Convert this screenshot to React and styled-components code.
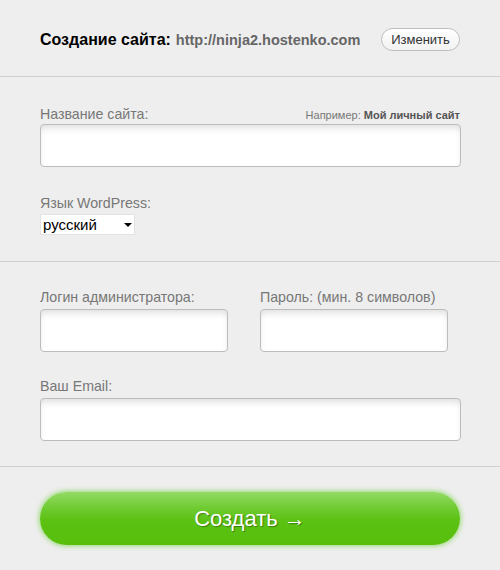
import React from 'react'
import styled, { createGlobalStyle } from 'styled-components'

const GlobalStyle = createGlobalStyle`
  html, body {
    margin: 0;
    padding: 0;
    background: #eeeeee;
  }
  body {
    font-family: "Liberation Sans", Arial, sans-serif;
  }
`;

const Page = styled.div`
  width: 500px;
  height: 570px;
  background: #eeeeee;
  overflow: hidden;
`;

const Section = styled.div`
  padding: ${props => props.pad || '0 40px'};
  border-bottom: ${props => props.last ? 'none' : '1px solid #d0d0d0'};
`;

const Header = styled(Section)`
  display: flex;
  align-items: center;
  height: 77px;
  box-sizing: border-box;
  padding: 3px 40px 0 40px;
`;

const Title = styled.h1`
  margin: 0;
  font-size: 16px;
  font-weight: bold;
  color: #000;
`;

const Url = styled.span`
  margin-left: 5px;
  font-size: 14.5px;
  font-weight: bold;
  color: #666;
`;

const ChangeButton = styled.button`
  margin-left: auto;
  width: 79px;
  height: 23px;
  padding: 0;
  border: 1px solid #bdbdbd;
  border-radius: 12px;
  background: linear-gradient(#ffffff, #f2f2f2);
  font-family: "Liberation Sans", Arial, sans-serif;
  font-size: 13px;
  color: #333;
  cursor: pointer;
`;

const LabelRow = styled.div`
  display: flex;
  align-items: baseline;
  justify-content: space-between;
  margin-bottom: ${props => props.gap || '1px'};
`;

const Label = styled.label`
  font-size: 14.2px;
  line-height: 18px;
  color: #777;
`;

const Hint = styled.span`
  font-size: 11px;
  color: #777;
  b {
    color: #555;
  }
`;

const Input = styled.input`
  display: block;
  box-sizing: border-box;
  width: ${props => props.width || '421px'};
  height: 43px;
  margin: 0;
  padding: 0 10px;
  border: 1px solid #bcbcbc;
  border-radius: 4px;
  background: #fff;
  box-shadow: inset 0 5px 7px -2px rgba(0, 0, 0, 0.13);
  font-family: "Liberation Sans", Arial, sans-serif;
  font-size: 16px;
  outline: none;
`;

const Field = styled.div`
  margin-top: ${props => props.top || '0'};
`;

const SelectWrap = styled.div`
  position: relative;
  width: 95px;
`;

const Select = styled.select`
  display: block;
  box-sizing: border-box;
  width: 95px;
  height: 21px;
  margin: 0;
  padding: 0 0 0 2px;
  border: 1px solid #e2e2e2;
  background: #fff;
  appearance: none;
  -webkit-appearance: none;
  font-family: "Liberation Sans", Arial, sans-serif;
  font-size: 15px;
  color: #000;
  border-radius: 0;
  outline: none;
`;

const Arrow = styled.span`
  position: absolute;
  right: 3px;
  top: 9px;
  width: 0;
  height: 0;
  border-left: 4px solid transparent;
  border-right: 4px solid transparent;
  border-top: 4px solid #000;
  pointer-events: none;
`;

const Columns = styled.div`
  display: grid;
  grid-template-columns: 188px 188px;
  column-gap: 32px;
`;

const CreateButton = styled.button`
  display: block;
  width: 420px;
  height: 53px;
  padding: 0;
  border: none;
  border-radius: 27px;
  background: linear-gradient(#94da66 0%, #6fcb31 30%, #5bc112 55%, #57bf0c 100%);
  box-shadow: 0 0 5px 1px rgba(140, 215, 100, 0.9);
  font-family: "Liberation Sans", Arial, sans-serif;
  font-size: 22px;
  color: #fff;
  text-shadow: 1px 1px 1px rgba(0, 0, 0, 0.35);
  cursor: pointer;
`;

export default function App() {
  return (
    <Page>
      <GlobalStyle />
      <Header>
        <Title>Создание сайта:</Title>
        <Url>http://ninja2.hostenko.com</Url>
        <ChangeButton>Изменить</ChangeButton>
      </Header>

      <Section pad="28px 40px 26px 40px">
        <LabelRow>
          <Label>Название сайта:</Label>
          <Hint>Например: <b>Мой личный сайт</b></Hint>
        </LabelRow>
        <Input type="text" />
        <Field top="27px">
          <LabelRow gap="2px">
            <Label>Язык WordPress:</Label>
          </LabelRow>
          <SelectWrap>
            <Select defaultValue="ru">
              <option value="ru">русский</option>
              <option value="en">english</option>
            </Select>
            <Arrow />
          </SelectWrap>
        </Field>
      </Section>

      <Section pad="26px 40px 25px 40px">
        <Columns>
          <div>
            <LabelRow gap="3px">
              <Label>Логин администратора:</Label>
            </LabelRow>
            <Input type="text" width="188px" />
          </div>
          <div>
            <LabelRow gap="3px">
              <Label>Пароль: (мин. 8 символов)</Label>
            </LabelRow>
            <Input type="password" width="188px" />
          </div>
        </Columns>
        <Field top="25px">
          <LabelRow gap="3px">
            <Label>Ваш Email:</Label>
          </LabelRow>
          <Input type="email" />
        </Field>
      </Section>

      <Section pad="25px 40px 0 40px" last>
        <CreateButton>Создать →</CreateButton>
      </Section>
    </Page>
  );
}
